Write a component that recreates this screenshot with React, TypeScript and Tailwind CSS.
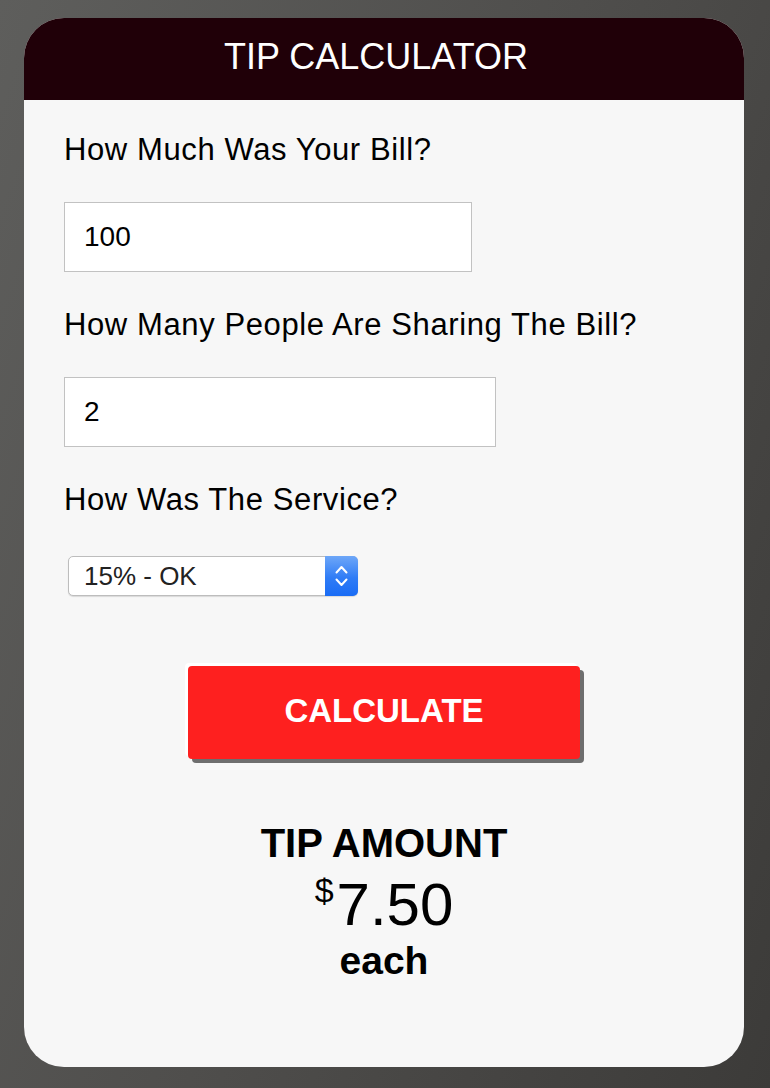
import { useState } from "react";

export default function App() {
  const [bill, setBill] = useState("100");
  const [people, setPeople] = useState("2");
  const [service, setService] = useState("0.15");

  const tip = (Number(bill) * Number(service)) / Math.max(Number(people) || 1, 1);

  return (
    <div className="min-h-screen w-full bg-[linear-gradient(110deg,#5e5e5c_0%,#4f4e4c_50%,#3c3b39_100%)] pt-[18px] px-[24px] font-['Liberation_Sans',Arial,sans-serif]">
      <div className="w-[720px] h-[1049px] rounded-[40px] overflow-hidden bg-[#f7f7f7]">
        <div className="h-[82px] bg-[#200008] flex items-center justify-center pb-1 pr-[16px]">
          <h1 className="text-white text-[36px] leading-none">TIP CALCULATOR</h1>
        </div>

        <div className="pt-[32px] pl-[40px]">
          <label htmlFor="bill" className="block text-[31px] leading-[36px] tracking-[0.6px] text-black mb-[34px]">
            How Much Was Your Bill?
          </label>
          <input
            id="bill"
            type="text"
            value={bill}
            onChange={(e) => setBill(e.target.value)}
            className="block w-[408px] h-[70px] border border-[#c2c2c2] bg-white pl-[19px] text-[28px] text-black outline-none"
          />

          <label htmlFor="people" className="block mt-[35px] text-[31px] leading-[36px] tracking-[0.6px] text-black mb-[34px]">
            How Many People Are Sharing The Bill?
          </label>
          <input
            id="people"
            type="text"
            value={people}
            onChange={(e) => setPeople(e.target.value)}
            className="block w-[432px] h-[70px] border border-[#c2c2c2] bg-white pl-[19px] text-[28px] text-black outline-none"
          />

          <label htmlFor="service" className="block mt-[35px] text-[31px] leading-[36px] tracking-[0.6px] text-black">
            How Was The Service?
          </label>
          <div className="relative mt-[38px] ml-[4px] w-[290px] h-[40px] rounded-[5px] border border-[#bdbdbd] bg-white shadow-[0_1px_1px_rgba(0,0,0,0.12)]">
            <select
              id="service"
              value={service}
              onChange={(e) => setService(e.target.value)}
              className="appearance-none w-full h-full bg-transparent pl-[15px] pr-[40px] text-[26px] text-[#222] outline-none"
            >
              <option value="0.3">30% - Outstanding</option>
              <option value="0.2">20% - Good</option>
              <option value="0.15">15% - OK</option>
              <option value="0.1">10% - Bad</option>
              <option value="0.05">5% - Terrible</option>
            </select>
            <div className="pointer-events-none absolute -top-px -right-px -bottom-px w-[33px] rounded-r-[5px] bg-[linear-gradient(180deg,#6ea7f8_0%,#2f7cf6_55%,#1a6cf5_100%)] flex items-center justify-center">
              <svg width="13" height="22" viewBox="0 0 13 22" fill="none" stroke="white" strokeWidth="2" strokeLinecap="round" strokeLinejoin="round">
                <path d="M1.5 7.5 L6.5 2 L11.5 7.5" />
                <path d="M1.5 14.5 L6.5 20 L11.5 14.5" />
              </svg>
            </div>
          </div>
        </div>

        <div className="flex flex-col items-center">
          <button
            type="button"
            className="mt-[70px] w-[392px] h-[93px] rounded-[4px] bg-[#fe201f] text-white font-bold text-[33px] pb-[3px] shadow-[4px_4px_0_#6e6e6e,-3px_-3px_0_#ffffff]"
          >
            CALCULATE
          </button>

          <div className="mt-[62px] text-[40px] leading-[44px] font-bold text-black">TIP AMOUNT</div>
          <div className="mt-[10px] text-[60px] leading-[60px] text-black">
            <span className="text-[34px] leading-[0] align-[23px] mr-[3px]">$</span>
            {tip.toFixed(2)}
          </div>
          <div className="mt-[4px] text-[39px] leading-[44px] font-bold text-black">each</div>
        </div>
      </div>
    </div>
  );
}
